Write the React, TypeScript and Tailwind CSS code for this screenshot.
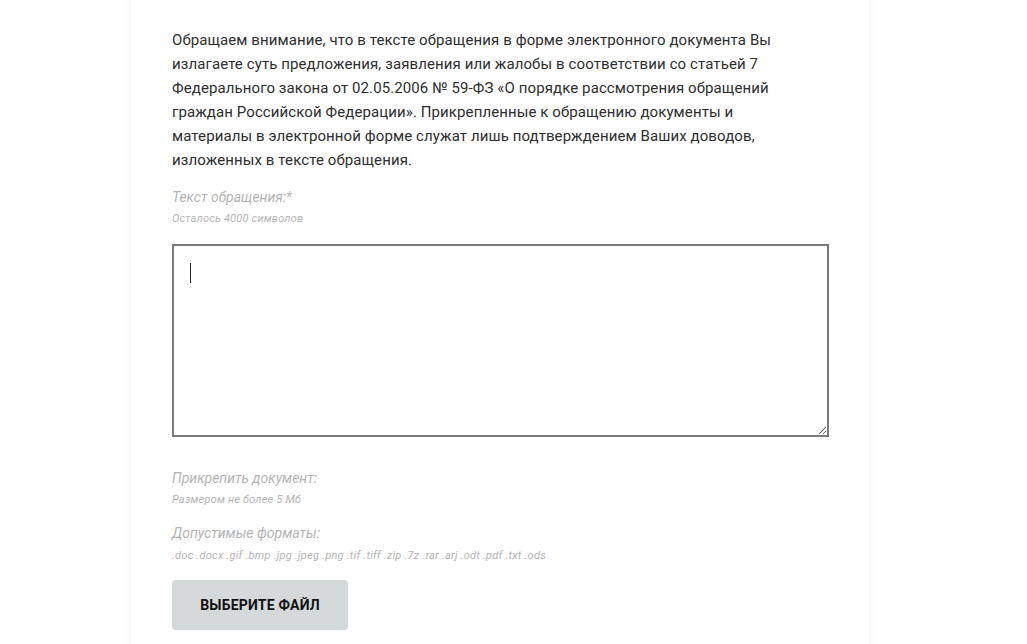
import React from "react";

const formats = ".doc .docx .gif .bmp .jpg .jpeg .png .tif .tiff .zip .7z .rar .arj .odt .pdf .txt .ods";

export default function App() {
  return (
    <div className="min-h-[644px] h-[644px] overflow-hidden bg-white font-['Roboto',sans-serif]">
      <div className="ml-[131px] w-[738px] h-[700px] bg-white shadow-[0_0_6px_rgba(0,0,0,0.07)] pl-[41px] pr-[40px] pt-[28px]">
        {/* Notice */}
        <p className="text-[15px] leading-[24px] text-[#2e2e2e] w-[625px] tracking-[0.1px]">
          Обращаем внимание, что в тексте обращения в форме электронного документа Вы излагаете суть
          предложения, заявления или жалобы в соответствии со статьей 7 Федерального закона от 02.05.2006
          № 59-ФЗ «О порядке рассмотрения обращений граждан Российской Федерации». Прикрепленные к
          обращению документы и материалы в электронной форме служат лишь подтверждением Ваших доводов,
          изложенных в тексте обращения.
        </p>

        {/* Message field */}
        <div className="mt-[16px] text-[14px] leading-[18px] italic text-[#b4b4b4]">Текст обращения:*</div>
        <div className="mt-[6px] text-[11px] leading-[14px] italic text-[#b4b4b4] tracking-[0.2px]">Осталось 4000 символов</div>
        <div className="relative mt-[18px] w-[657px]">
          <textarea className="block w-[657px] h-[193px] border-2 border-[#7a7a7a] bg-white outline-none resize" />
          <div className="absolute left-[18px] top-[19px] w-px h-[20px] bg-[#222]" />
        </div>

        {/* Attachments */}
        <div className="mt-[32px] text-[14px] leading-[18px] italic text-[#b4b4b4]">Прикрепить документ:</div>
        <div className="mt-[6px] text-[11px] leading-[14px] italic text-[#b4b4b4] tracking-[0.2px]">Размером не более 5 Мб</div>
        <div className="mt-[17px] text-[14px] leading-[18px] italic text-[#b4b4b4]">Допустимые форматы:</div>
        <div className="mt-[7px] text-[11px] leading-[14px] italic text-[#b4b4b4] tracking-[0.25px]">{formats}</div>

        <button className="mt-[17px] w-[176px] h-[50px] rounded-[4px] bg-[#d6d9da] text-[14px] font-bold text-[#111] tracking-[0.2px]">
          ВЫБЕРИТЕ ФАЙЛ
        </button>
      </div>
    </div>
  );
}
